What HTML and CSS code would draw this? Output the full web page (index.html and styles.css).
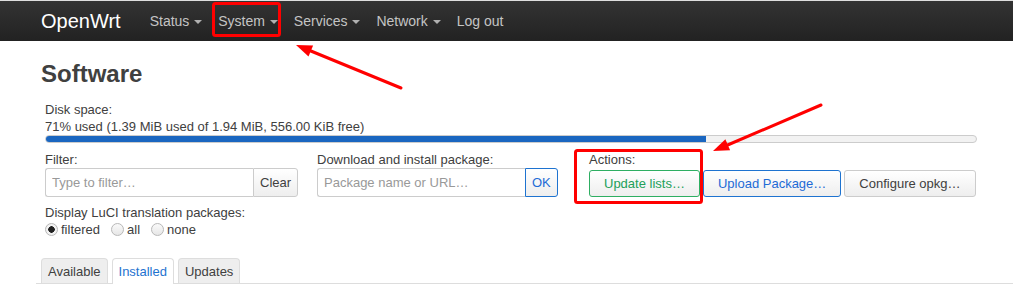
FILE: index.html
```html
<!DOCTYPE html>
<html lang="en">
<head>
    <meta charset="UTF-8">
    <meta name="viewport" content="width=device-width, initial-scale=1.0">
    <title>Software - OpenWrt</title>
    <link rel="stylesheet" href="styles.css">
</head>
<body>
    <header class="navbar">
        <a class="brand" href="#">OpenWrt</a>
        <ul class="nav">
            <li><a href="#">Status <span class="caret"></span></a></li>
            <li><a href="#">System <span class="caret"></span></a></li>
            <li><a href="#">Services <span class="caret"></span></a></li>
            <li><a href="#">Network <span class="caret"></span></a></li>
            <li><a href="#">Log out</a></li>
        </ul>
    </header>

    <main class="content">
        <h2 class="page-title">Software</h2>

        <div class="disk">
            <div class="label">Disk space:</div>
            <div class="disk-info">71% used (1.39 MiB used of 1.94 MiB, 556.00 KiB free)</div>
            <div class="progress"><div class="progress-bar" style="width: 71%"></div></div>
        </div>

        <div class="controls">
            <div class="control filter">
                <div class="label">Filter:</div>
                <div class="input-group">
                    <input type="text" class="text-input" placeholder="Type to filter…">
                    <button class="addon">Clear</button>
                </div>
            </div>
            <div class="control download">
                <div class="label">Download and install package:</div>
                <div class="input-group">
                    <input type="text" class="text-input" placeholder="Package name or URL…">
                    <button class="addon addon-blue">OK</button>
                </div>
            </div>
            <div class="control actions">
                <div class="label">Actions:</div>
                <div class="btn-row">
                    <button class="btn btn-green">Update lists…</button>
                    <button class="btn btn-blue">Upload Package…</button>
                    <button class="btn">Configure opkg…</button>
                </div>
            </div>
        </div>

        <div class="i18n">
            <div class="label">Display LuCI translation packages:</div>
            <div class="radios">
                <label><input type="radio" name="i18n" checked> filtered</label>
                <label><input type="radio" name="i18n"> all</label>
                <label><input type="radio" name="i18n"> none</label>
            </div>
        </div>

        <ul class="tabs">
            <li>Available</li>
            <li class="active">Installed</li>
            <li>Updates</li>
        </ul>
    </main>

    <!-- screenshot annotations -->
    <svg class="marks" width="1013" height="289" viewBox="0 0 1013 289">
        <g fill="none" stroke="#ff0000" stroke-width="3">
            <rect x="213.5" y="3.5" width="66" height="32" rx="2"/>
            <rect x="575.5" y="150.5" width="126" height="52" rx="2"/>
        </g>
        <g stroke="#ff0000" stroke-width="3" stroke-linecap="round">
            <line x1="401" y1="88" x2="306" y2="49"/>
            <line x1="821" y1="105" x2="723" y2="147"/>
        </g>
        <g fill="#ff0000">
            <polygon points="296,45 313.1,45.5 308.5,56.6"/>
            <polygon points="713,151 730.1,150.2 725.4,139.2"/>
        </g>
    </svg>
</body>
</html>
```

FILE: styles.css
```css
* {
    box-sizing: border-box;
}

body {
    margin: 0;
    font-family: "Liberation Sans", Arial, sans-serif;
    font-size: 13px;
    line-height: 17px;
    color: #404040;
    background-color: #ffffff;
    position: relative;
}

.navbar {
    height: 41px;
    display: flex;
    align-items: center;
    padding-left: 41px;
    border-top: 1px solid #dedede;
    background: linear-gradient(#333333, #222222);
}

.brand {
    font-size: 20px;
    color: #ffffff;
    text-decoration: none;
    margin-right: 21px;
}

.nav {
    display: flex;
    list-style: none;
    margin: 0;
    padding: 0;
}

.nav a {
    display: block;
    padding: 0 8px;
    font-size: 14px;
    color: #c4c4c4;
    text-decoration: none;
}

.caret {
    display: inline-block;
    width: 0;
    height: 0;
    margin-left: 1px;
    vertical-align: middle;
    border-top: 4px solid #b0b0b0;
    border-left: 4px solid transparent;
    border-right: 4px solid transparent;
}

.content {
    padding: 0 0 0 41px;
}

.page-title {
    margin: 19px 0 13px;
    font-size: 24px;
    line-height: 28px;
    font-weight: bold;
}

.disk,
.controls,
.i18n {
    margin-left: 4px;
}

.progress {
    width: 932px;
    height: 8px;
    border: 1px solid #cccccc;
    border-radius: 4px;
    background-color: #f2f2f2;
    overflow: hidden;
}

.progress-bar {
    height: 100%;
    background-color: #1a66c0;
}

.controls {
    display: flex;
    margin-top: 8px;
}

.filter {
    width: 272px;
}

.download {
    width: 272px;
}

.input-group {
    display: flex;
    height: 29px;
}

.text-input {
    width: 208px;
    height: 29px;
    margin: 0;
    padding: 0 6px;
    font-family: inherit;
    font-size: 13px;
    color: #404040;
    border: 1px solid #cccccc;
    border-right: none;
    border-radius: 3px 0 0 3px;
    outline: none;
}

.text-input::placeholder {
    color: #999999;
}

.addon {
    margin: 0;
    padding: 0 6px;
    font-family: inherit;
    font-size: 13px;
    color: #404040;
    background: linear-gradient(#ffffff, #eeeeee);
    border: 1px solid #cccccc;
    border-radius: 0 3px 3px 0;
}

.addon-blue {
    color: #1e6bd6;
    border-color: #1e73d0;
}

.btn-row {
    display: flex;
    gap: 3px;
    margin-top: 2px;
}

.btn {
    height: 27px;
    margin: 0;
    padding: 0 14px;
    font-family: inherit;
    font-size: 13px;
    color: #404040;
    background: linear-gradient(#ffffff, #eeeeee);
    border: 1px solid #cccccc;
    border-radius: 3px;
}

.btn-green {
    color: #22a05a;
    border-color: #2eae62;
}

.btn-blue {
    color: #1e6bd6;
    border-color: #1e73d0;
}

.i18n {
    margin-top: 7px;
}

.radios {
    display: flex;
    gap: 11px;
}

.radios label {
    display: flex;
    align-items: center;
    gap: 3px;
}

.radios input {
    appearance: none;
    width: 13px;
    height: 13px;
    margin: 0;
    border: 1px solid #b8b8b8;
    border-radius: 50%;
    background: linear-gradient(#fafafa, #e6e6e6);
}

.radios input:checked {
    background: radial-gradient(circle, #222222 0 3px, #f2f2f2 3.5px);
}

.tabs {
    display: flex;
    gap: 4px;
    list-style: none;
    margin: 20px 0 0 -5px;
    padding: 0 0 0 5px;
    border-bottom: 1px solid #dddddd;
}

.tabs li {
    height: 25px;
    padding: 4px 6px 0;
    margin-bottom: -1px;
    background-color: #eeeeee;
    border: 1px solid #dddddd;
    border-bottom: none;
    border-radius: 4px 4px 0 0;
}

.tabs li.active {
    color: #1e73d0;
    background-color: #ffffff;
    height: 26px;
}

.marks {
    position: absolute;
    top: 0;
    left: 0;
    pointer-events: none;
}
```
